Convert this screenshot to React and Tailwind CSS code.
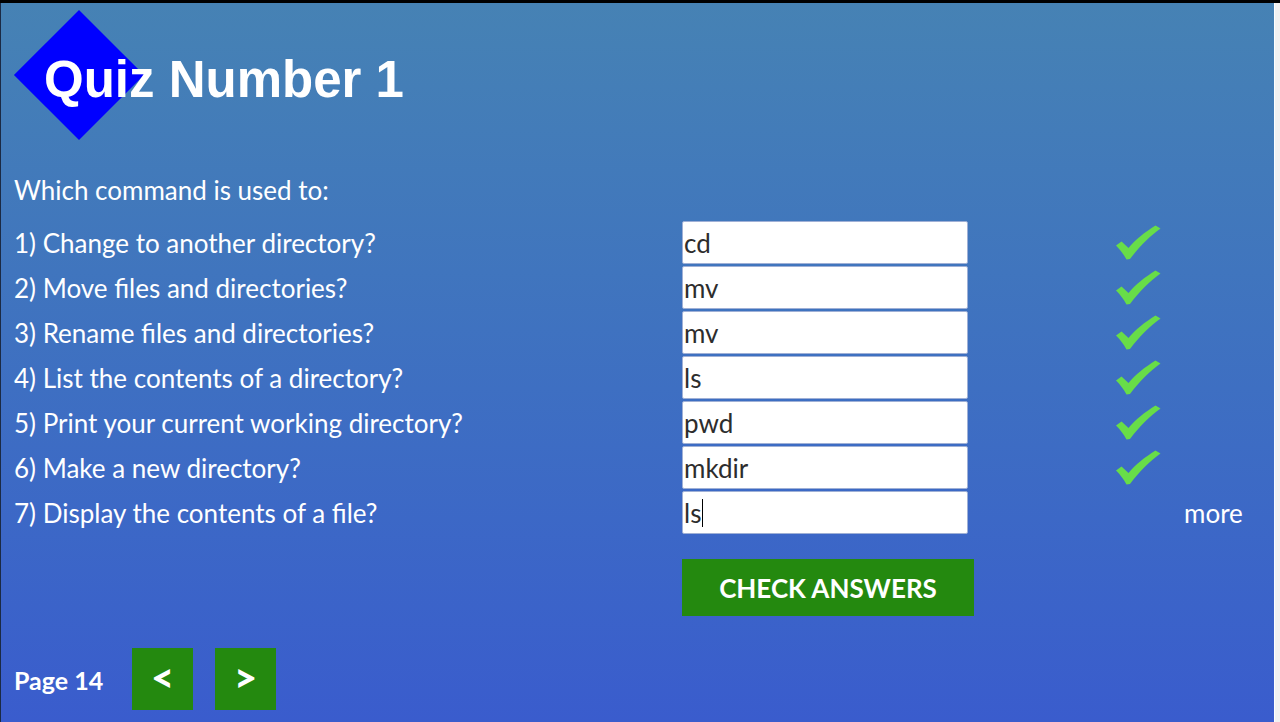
import React from "react";

const rows = [
  ["1) Change to another directory?", "cd", true],
  ["2) Move files and directories?", "mv", true],
  ["3) Rename files and directories?", "mv", true],
  ["4) List the contents of a directory?", "ls", true],
  ["5) Print your current working directory?", "pwd", true],
  ["6) Make a new directory?", "mkdir", true],
  ["7) Display the contents of a file?", "ls", false],
];

function Check() {
  return (
    <svg width="48" height="38" viewBox="0 0 48 38" className="block">
      <path
        d="M1 21.5 L6.5 17.5 L13.5 24 C20 16 30 8 40.5 1.5 L45.5 4.5 C35 12 24 23 15 35 L11.5 35.5 C8.5 30 5 25.5 1 21.5 Z"
        fill="#68dd48"
      />
    </svg>
  );
}

export default function App() {
  return (
    <div
      className="w-[1280px] h-[722px] flex flex-col overflow-hidden bg-black"
      style={{ fontFamily: "Lato, 'Open Sans', sans-serif" }}
    >
      <div className="h-[3px] shrink-0 bg-black" />
      <div className="flex flex-1">
        <div className="w-[1px] bg-[#1b2a44]" />
        <div className="flex-1 flex flex-col bg-gradient-to-b from-[#4682b4] to-[#3a5ccd] text-white">
          {/* Header */}
          <div className="relative h-[147px] shrink-0">
            <div className="absolute left-[32px] top-[26px] w-[92px] h-[92px] bg-[#0000ff] rotate-45" />
            <div
              className="absolute left-[43px] top-[51px] text-[51px] leading-none font-bold text-white"
              style={{ fontFamily: "'Liberation Sans', Arial, sans-serif" }}
            >
              Quiz Number 1
            </div>
          </div>

          <div className="pl-[13px] text-[26px] leading-none mt-[27px]">Which command is used to:</div>

          <div className="flex flex-col gap-[2px] mt-[18px]">
            {rows.map(([q, a, ok], i) => (
              <div key={i} className="grid grid-cols-[681px_286px_1fr] h-[43px] items-center">
                <div className="pl-[13px] text-[26px] leading-none">{q}</div>
                <div className="h-[43px] bg-white border border-[#9fb0d6] rounded-[2px] flex items-center pl-[1px] text-[26px] leading-none text-[#2d2d2d]">
                  {a}
                  {i === 6 && <span className="inline-block w-[1.5px] h-[28px] bg-black ml-[0.5px]" />}
                </div>
                <div className="h-[43px] flex items-center">
                  {ok ? (
                    <div className="ml-[147px]">
                      <Check />
                    </div>
                  ) : (
                    <div className="ml-[216px] text-[26px] leading-none">more</div>
                  )}
                </div>
              </div>
            ))}
          </div>

          <div className="pl-[681px] mt-[25px]">
            <button className="w-[292px] h-[57px] bg-[#24890f] text-white font-bold text-[26px] leading-none flex items-center justify-center">
              CHECK ANSWERS
            </button>
          </div>

          <div className="flex items-center mt-[32px] pl-[13px]">
            <div className="font-bold text-[25px] leading-none w-[118px] pt-[3px]">Page 14</div>
            <button className="w-[61px] h-[62px] bg-[#24890f] text-white font-black text-[40px] leading-none flex items-center justify-center pb-[4px]">
              &lt;
            </button>
            <button className="w-[61px] h-[62px] ml-[22px] bg-[#24890f] text-white font-black text-[40px] leading-none flex items-center justify-center pb-[4px]">
              &gt;
            </button>
          </div>
        </div>
        <div className="w-[6px] border-l border-white bg-[#f1f1f1]" />
      </div>
    </div>
  );
}
